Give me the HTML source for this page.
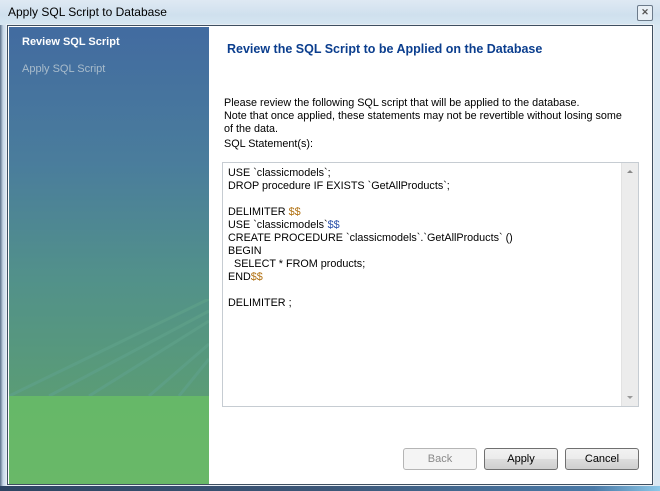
<!DOCTYPE html>
<html><head><style>
*{margin:0;padding:0;box-sizing:border-box}
body{width:660px;height:491px;overflow:hidden;font-family:"Liberation Sans",Tahoma,sans-serif;font-size:10.8px;position:relative;
background:linear-gradient(90deg,#5a6f88 0,#c6d6e6 3px,#dbe8f3 6px,#e3eef7 50%,#d9e7f2 100%)}
.title{position:absolute;left:0;top:0;width:660px;height:25px;background:linear-gradient(180deg,#dfe9f3,#cfe0ee 60%,#d6e6f1);}
.title span{position:absolute;left:8px;top:5px;font-size:12px;color:#000}
.close{position:absolute;left:637px;top:5px;width:16px;height:16px;border:1px solid #6c7b8b;border-radius:2px;background:#e9f0f6;font-size:9px;line-height:13px;text-align:center;color:#555;font-weight:bold}
.bottom{position:absolute;left:0;top:486px;width:660px;height:5px;background:linear-gradient(90deg,#2e4563,#3c5778 50%,#4a7aa8 90%,#8cc8e8)}
.client{position:absolute;left:7px;top:25px;width:646px;height:460px;background:#fff;border:1px solid #3f4f60;box-shadow:0 0 0 1px #e8eef4}
.side{position:absolute;left:1px;top:1px;width:200px;height:457px;background:linear-gradient(180deg,#426ba0 0,#4a7d9c 30%,#52918a 55%,#5a9c76 80.7%,#66b868 80.8%,#69b868 100%);overflow:hidden}
.side .a{position:absolute;left:13px;top:9px;color:#fff;font-weight:bold;font-size:11px}
.side .b{position:absolute;left:13px;top:36px;color:#a9bccb;font-size:11px}
h1{position:absolute;left:219px;top:16px;font-size:12.5px;color:#0b3e8e;font-weight:bold}
.p{position:absolute;left:216px;top:71px;line-height:13px;color:#000;white-space:nowrap}
.box{position:absolute;left:214px;top:136px;width:417px;height:245px;border:1px solid #c6ccd2}
.code{position:absolute;left:5px;top:4px;line-height:13px;white-space:pre;color:#000}
.o{color:#b07010}.bl{color:#2a50a8}
.sb{position:absolute;right:0;top:0;width:17px;height:243px;background:#ececec;border-left:1px solid #e2e2e2}
.btn{position:absolute;top:422px;width:74px;height:22px;border:1px solid #707070;border-radius:3px;background:linear-gradient(180deg,#f2f2f2 0,#ebebeb 50%,#dddddd 51%,#cfcfcf);text-align:center;line-height:20px;font-size:11px}
</style></head><body>
<div class="title"><span>Apply SQL Script to Database</span><div class="close">✕</div></div>
<div class="client">
 <div class="side">
  <div class="a">Review SQL Script</div><div class="b">Apply SQL Script</div>
  <svg style="position:absolute;left:0;top:272px" width="200" height="97"><g stroke="#5fa18a" stroke-width="3" fill="none" opacity=".7"><path d="M0 97 L200 0"/><path d="M40 97 L200 12"/><path d="M80 97 L200 22"/><path d="M140 97 L200 45"/><path d="M170 97 L200 60"/></g></svg>
 </div>
 <h1>Review the SQL Script to be Applied on the Database</h1>
 <div class="p">Please review the following SQL script that will be applied to the database.<br>Note that once applied, these statements may not be revertible without losing some<br>of the data.<div style="margin-top:2px">SQL Statement(s):</div></div>
 <div class="box"><div class="code">USE `classicmodels`;
DROP procedure IF EXISTS `GetAllProducts`;

DELIMITER <span class="o">$$</span>
USE `classicmodels`<span class="bl">$$</span>
CREATE PROCEDURE `classicmodels`.`GetAllProducts` ()
BEGIN
  SELECT * FROM products;
END<span class="o">$$</span>

DELIMITER ;</div>
 <div class="sb"><div style="position:absolute;left:5px;top:7px;border:3px solid transparent;border-bottom:3px solid #888;border-top:0;width:0"></div><div style="position:absolute;left:5px;bottom:7px;border:3px solid transparent;border-top:3px solid #999;border-bottom:0;width:0"></div></div></div>
 <div class="btn" style="left:395px;color:#8a8a8a;border-color:#b5b5b5;background:#f4f4f4">Back</div>
 <div class="btn" style="left:476px">Apply</div>
 <div class="btn" style="left:557px">Cancel</div>
</div>
<div class="bottom"></div>
</body></html>
